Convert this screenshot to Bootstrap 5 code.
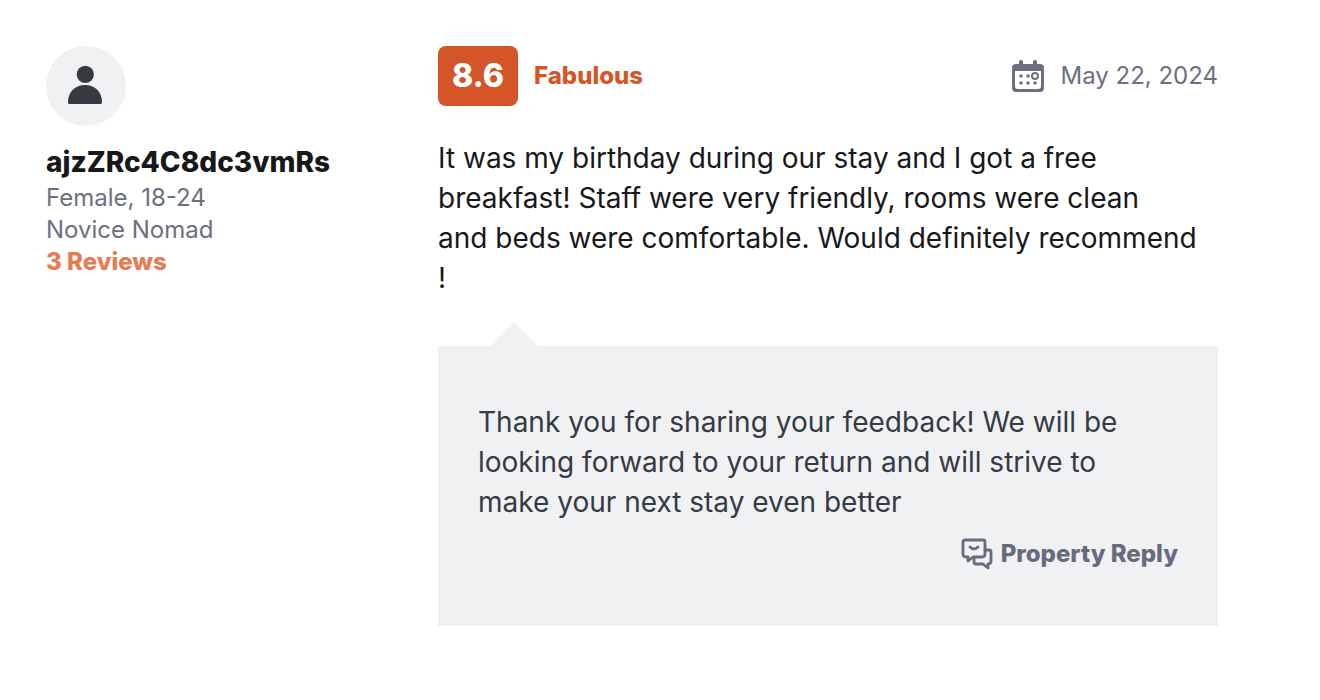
<!DOCTYPE html>
<html lang="en">
<head>
<meta charset="utf-8">
<meta name="viewport" content="width=device-width, initial-scale=1">
<title>Guest review</title>
<link href="https://cdn.jsdelivr.net/npm/bootstrap@5.3.0/dist/css/bootstrap.min.css" rel="stylesheet">
<style>
body{font-family:Inter,"Liberation Sans",sans-serif;font-size:24px;line-height:32px;color:#17181a;background:#fff}
.review{display:grid;grid-template-columns:352px minmax(0,1fr);gap:40px;padding:46px 102px 46px 46px}
.avatar{width:80px;height:80px;background:#f0f1f3}
.heavy{font-weight:800}
.guest-name{font-size:28px;line-height:40px;margin-top:16px}
.muted{color:#6b7080}
.reviews-link{color:#e57c53}
.score{font-size:32px;background:#d45628;width:80px;height:60px;border-radius:8px}
.rating{color:#d45628}
.copy{font-size:28px;line-height:40px}
.reply{background:#f0f1f3;color:#363a44;padding:56px 40px}
.reply::before{content:"";position:absolute;left:52px;bottom:100%;border:solid transparent;border-width:0 24px 24px;border-bottom-color:#f0f1f3}
.reply-label{color:#666c7b}
</style>
</head>
<body>
<article class="review">
<aside>
<div class="avatar rounded-circle d-flex align-items-center justify-content-center"><svg width="80" height="80" viewBox="0 0 80 80" fill="#363a41" aria-hidden="true"><circle cx="39.300" cy="28.300" r="8.600"/><path d="M22 56C22 46 29 39 39 39s17 7 17 17q0 2-1 2H23q-1 0-1-2z"/></svg></div>
<h1 class="guest-name heavy mb-0">ajzZRc4C8dc3vmRs</h1>
<div class="muted">Female, 18-24</div>
<div class="muted">Novice Nomad</div>
<a href="#" class="reviews-link heavy text-decoration-none">3 Reviews</a>
</aside>
<main>
<header class="d-flex align-items-center">
<div class="score heavy text-white d-flex align-items-center justify-content-center me-3">8.6</div>
<div class="rating heavy">Fabulous</div>
<time datetime="2024-05-22" class="muted ms-auto d-flex align-items-center gap-3"><svg width="32" height="32" viewBox="0 0 32 32" fill="currentColor" aria-hidden="true"><path fill-rule="evenodd" d="M7 2a2 2 0 0 1 4 0v2h10V2a2 2 0 0 1 4 0v2h3q4 0 4 4v20q0 4-4 4H4q-4 0-4-4V8q0-4 4-4h3zM3 11v15q0 3 3 3h20q3 0 3-3V11z"/><circle cx="9" cy="16" r="1.800"/><circle cx="16" cy="16" r="1.800"/><circle cx="9" cy="23" r="1.800"/><circle cx="16" cy="23" r="1.800"/><circle cx="23" cy="23" r="1.800"/><circle cx="23" cy="16" r="3" fill="none" stroke="currentColor" stroke-width="2"/></svg>May 22, 2024</time>
</header>
<p class="copy mb-0 mt-4 pt-2">It was my birthday during our stay and I got a free<br>breakfast! Staff were very friendly, rooms were clean<br>and beds were comfortable. Would definitely recommend<br>!</p>
<section class="reply position-relative mt-5">
<p class="copy mb-3">Thank you for sharing your feedback! We will be<br>looking forward to your return and will strive to<br>make your next stay even better</p>
<div class="reply-label heavy d-flex justify-content-end gap-2"><svg width="32" height="32" viewBox="0 0 32 32" fill="none" stroke="currentColor" stroke-width="2.800" stroke-linejoin="round" stroke-linecap="round" aria-hidden="true"><path d="M4 2h18q2 0 2 2v12q0 3-3 3H12l-5 4v-4H5q-3 0-3-3V4q0-2 2-2z"/><path d="M9 9q4 4 8 0M24 12h4q2 0 2 2v9q0 3-3 3v4l-5-4h-7q-2 0-2-2v-4"/></svg>Property Reply</div>
</section>
</main>
</article>
</body>
</html>
